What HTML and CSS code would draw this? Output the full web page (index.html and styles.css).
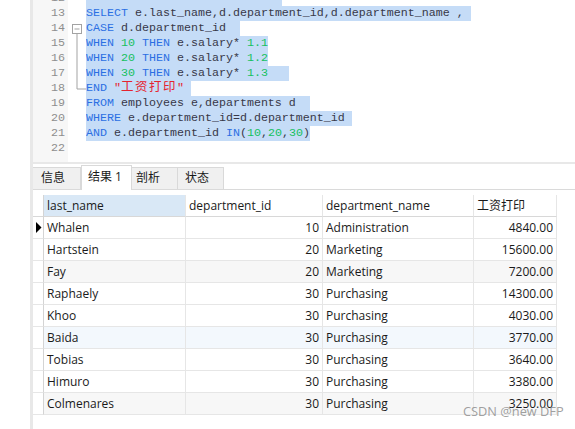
FILE: index.html
```html
<!DOCTYPE html>
<html lang="zh">
<head>
<meta charset="utf-8">
<title>Query</title>
<link rel="stylesheet" href="styles.css">
</head>
<body>
<div class="app">
  <div class="leftpad"></div>
  <div class="rail"></div>
  <div class="main">
    <div class="editor">
      <div class="gutter">
        <div class="ln">12</div><div class="ln">13</div><div class="ln">14</div><div class="ln">15</div><div class="ln">16</div><div class="ln">17</div><div class="ln">18</div><div class="ln">19</div><div class="ln">20</div><div class="ln">21</div><div class="ln">22</div>
      </div>
      <div class="folds">
        <div class="fl"></div>
        <div class="fl"></div>
        <div class="fl"><svg width="18" height="15" viewBox="0 0 18 15"><rect x="4.5" y="3.5" width="9" height="9" fill="#fff" stroke="#a3a3a3"/><line x1="6.5" y1="8" x2="11.5" y2="8" stroke="#a3a3a3"/><line x1="9" y1="12.5" x2="9" y2="15" stroke="#a3a3a3"/></svg></div>
        <div class="fl"><svg width="18" height="15" viewBox="0 0 18 15"><line x1="9" y1="0" x2="9" y2="15" stroke="#a3a3a3"/></svg></div>
        <div class="fl"><svg width="18" height="15" viewBox="0 0 18 15"><line x1="9" y1="0" x2="9" y2="15" stroke="#a3a3a3"/></svg></div>
        <div class="fl"><svg width="18" height="15" viewBox="0 0 18 15"><line x1="9" y1="0" x2="9" y2="15" stroke="#a3a3a3"/></svg></div>
        <div class="fl"><svg width="18" height="15" viewBox="0 0 18 15"><path d="M9 0V8H18" fill="none" stroke="#a3a3a3"/></svg></div>
        <div class="fl"></div>
        <div class="fl"></div>
        <div class="fl"></div>
        <div class="fl"></div>
      </div>
      <div class="code">
        <div class="cl"><span class="sel">                            </span></div>
        <div class="cl"><span class="sel"><span class="kw">SELECT</span> e.last_name,d.department_id,d.department_name , </span></div>
        <div class="cl"><span class="sel"><span class="kw">CASE</span> d.department_id  </span></div>
        <div class="cl"><span class="sel"><span class="kw">WHEN</span> <span class="num">10</span> <span class="kw">THEN</span> e.salary* <span class="num">1.1</span></span></div>
        <div class="cl"><span class="sel"><span class="kw">WHEN</span> <span class="num">20</span> <span class="kw">THEN</span> e.salary* <span class="num">1.2</span></span></div>
        <div class="cl"><span class="sel"><span class="kw">WHEN</span> <span class="num">30</span> <span class="kw">THEN</span> e.salary* <span class="num">1.3</span>   </span></div>
        <div class="cl"><span class="sel"><span class="kw">END</span> <span class="str">"<span class="cjk">工资打印</span>"</span> </span></div>
        <div class="cl"><span class="sel"><span class="kw">FROM</span> employees e,departments d  </span></div>
        <div class="cl"><span class="sel"><span class="kw">WHERE</span> e.department_id=d.department_id </span></div>
        <div class="cl"><span class="sel"><span class="kw">AND</span> e.department_id <span class="kw">IN</span>(<span class="num">10</span>,<span class="num">20</span>,<span class="num">30</span>)</span></div>
        <div class="cl"></div>
      </div>
    </div>
    <div class="split"></div>
    <div class="tabbar">
      <div class="tab t1">信息</div>
      <div class="tab t2 active">结果 1</div>
      <div class="tab t3">剖析</div>
      <div class="tab t4">状态</div>
    </div>
    <div class="grid">
      <div class="row head">
        <div class="c ind"></div><div class="c hsel">last_name</div><div class="c">department_id</div><div class="c">department_name</div><div class="c">工资打印</div>
      </div>
      <div class="row">
        <div class="c ind"><svg width="6" height="11" viewBox="0 0 6 11"><path d="M0 0L5.5 5.5L0 11Z" fill="#000"/></svg></div><div class="c">Whalen</div><div class="c r">10</div><div class="c">Administration</div><div class="c r">4840.00</div>
      </div>
      <div class="row">
        <div class="c ind"></div><div class="c">Hartstein</div><div class="c r">20</div><div class="c">Marketing</div><div class="c r">15600.00</div>
      </div>
      <div class="row gray">
        <div class="c ind"></div><div class="c">Fay</div><div class="c r">20</div><div class="c">Marketing</div><div class="c r">7200.00</div>
      </div>
      <div class="row">
        <div class="c ind"></div><div class="c">Raphaely</div><div class="c r">30</div><div class="c">Purchasing</div><div class="c r">14300.00</div>
      </div>
      <div class="row">
        <div class="c ind"></div><div class="c">Khoo</div><div class="c r">30</div><div class="c">Purchasing</div><div class="c r">4030.00</div>
      </div>
      <div class="row blue">
        <div class="c ind"></div><div class="c">Baida</div><div class="c r">30</div><div class="c">Purchasing</div><div class="c r">3770.00</div>
      </div>
      <div class="row">
        <div class="c ind"></div><div class="c">Tobias</div><div class="c r">30</div><div class="c">Purchasing</div><div class="c r">3640.00</div>
      </div>
      <div class="row">
        <div class="c ind"></div><div class="c">Himuro</div><div class="c r">30</div><div class="c">Purchasing</div><div class="c r">3380.00</div>
      </div>
      <div class="row gray">
        <div class="c ind"></div><div class="c">Colmenares</div><div class="c r">30</div><div class="c">Purchasing</div><div class="c r">3250.00</div>
      </div>
    </div>
  </div>
</div>
<div class="watermark">CSDN @new DFP</div>
</body>
</html>
```
FILE: styles.css
```css
html, body {
  margin: 0;
  padding: 0;
}
body {
  width: 575px;
  height: 429px;
  overflow: hidden;
  background: #fff;
  position: relative;
  font-family: "Open Sans", "Noto Sans CJK SC", sans-serif;
  font-size: 12px;
  color: #1a1a1a;
}
.app {
  display: flex;
  height: 429px;
}
.leftpad {
  width: 30px;
  flex: none;
}
.rail {
  width: 3px;
  flex: none;
  background: #e8e8e8;
}
.main {
  flex: 1;
  min-width: 0;
  display: flex;
  flex-direction: column;
}

/* editor */
.editor {
  height: 162px;
  flex: none;
  overflow: hidden;
  display: flex;
  font-family: "Liberation Mono", "Noto Sans CJK SC", monospace;
  font-size: 11.67px;
  line-height: 15px;
}
.gutter {
  width: 35px;
  flex: none;
  box-sizing: border-box;
  padding-right: 3px;
  margin-top: -9px;
  background: #f7f7f7;
  text-align: right;
  color: #8e8e8e;
}
.folds {
  width: 18px;
  flex: none;
  margin-top: -9px;
}
.code {
  flex: 1;
  margin-top: -9px;
  color: #383848;
}
.ln, .fl, .cl {
  height: 15px;
  overflow: hidden;
}
.fl svg {
  display: block;
}
.cl {
  white-space: pre;
}
.sel {
  display: inline-block;
  height: 15px;
  vertical-align: top;
  background: #c5dcf7;
}
.kw { color: #2b6fe3; }
.num { color: #16c060; }
.str { color: #e5232f; }
.cjk {
  font-family: "Noto Sans CJK SC", sans-serif;
  font-size: 12.5px;
  letter-spacing: 1.5px;
  line-height: 8px;
}

/* splitter + tabs */
.split {
  height: 2px;
  flex: none;
  background: #e8e8e8;
}
.tabbar {
  height: 25px;
  flex: none;
  display: flex;
  align-items: flex-end;
  border-bottom: 1px solid #dadada;
}
.tab {
  box-sizing: border-box;
  height: 22px;
  line-height: 20px;
  background: #f0f0f0;
  border: 1px solid #d9d9d9;
  border-bottom: none;
  border-left: none;
  color: #1a1a1a;
}
.tab.active {
  height: 25px;
  line-height: 22px;
  margin-bottom: -1px;
  background: #fff;
  border-left: 1px solid #d9d9d9;
}
.t1 { width: 48px; padding-left: 8px; }
.t2 { width: 51px; padding-left: 6px; }
.t3 { width: 46px; padding-left: 4px; }
.t4 { width: 46px; padding-left: 7px; }

/* grid */
.grid {
  margin-top: 5px;
}
.row {
  display: grid;
  grid-template-columns: 11px 142px 137px 151px 83px;
  height: 22px;
}
.c {
  box-sizing: border-box;
  height: 22px;
  line-height: 21px;
  padding: 0 3px;
  border-right: 1px solid #e6e6e6;
  border-bottom: 1px solid #e6e6e6;
  white-space: nowrap;
  overflow: hidden;
}
.c.r {
  text-align: right;
}
.c.ind {
  padding: 0;
  background: #fff;
  border-right-color: #d4d4d4;
  display: flex;
  align-items: center;
  padding-left: 3px;
}
.head .c {
  border-bottom-color: #d8d8d8;
}
.head .hsel {
  background: #d9e8f6;
}
.row.gray .c:not(.ind) {
  background: #f7f7f7;
}
.row.blue .c:not(.ind) {
  background: #f3f8fd;
}

.watermark {
  position: absolute;
  left: 463px;
  top: 403px;
  font-size: 12.8px;
  line-height: 16px;
  color: rgba(135, 135, 135, 0.8);
}
```
